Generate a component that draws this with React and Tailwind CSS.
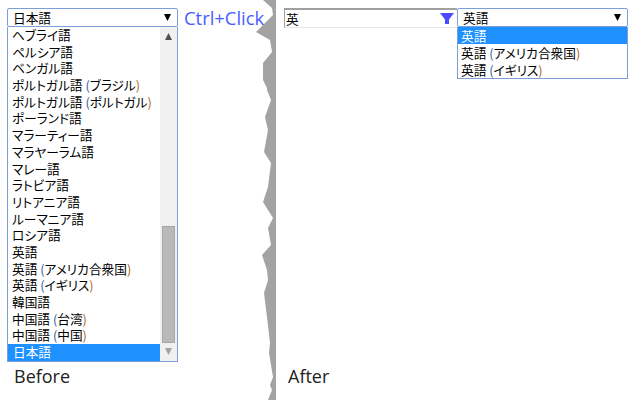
const JP = "font-['Noto_Sans_CJK_JP','Liberation_Sans',sans-serif] [font-feature-settings:'palt']"

const languages = [
  ['ヘブライ語'], ['ペルシア語'], ['ベンガル語'], ['ポルトガル語', 'ブラジル'], ['ポルトガル語', 'ポルトガル'],
  ['ポーランド語'], ['マラーティー語'], ['マラヤーラム語'], ['マレー語'], ['ラトビア語'], ['リトアニア語'],
  ['ルーマニア語'], ['ロシア語'], ['英語'], ['英語', 'アメリカ合衆国'], ['英語', 'イギリス'], ['韓国語'],
  ['中国語', '台湾'], ['中国語', '中国'], ['日本語'],
]

const filtered = [['英語'], ['英語', 'アメリカ合衆国'], ['英語', 'イギリス']]

function Label({ name, region }) {
  return (
    <>
      {name}
      {region && (
        <>
          {' '}
          <span className="text-[#2f5f9f]">(</span>
          {region}
          <span className="text-[#a8641e]">)</span>
        </>
      )}
    </>
  )
}

function Caret({ className }) {
  return (
    <svg width="7" height="7" viewBox="0 0 7 7" className={className}>
      <path d="M0 0h7L3.5 7z" fill="currentColor" />
    </svg>
  )
}

function SelectBox({ value }) {
  return (
    <div className="flex h-full items-center justify-between rounded-[2px] border border-[#7c9fd8] bg-white pl-[5px] pr-[6px]">
      <span>{value}</span>
      <Caret className="text-black" />
    </div>
  )
}

function Scrollbar() {
  return (
    <div className="flex w-[17px] flex-col items-center bg-[#f0f0f0]">
      <div className="flex h-[17px] shrink-0 items-center justify-center pt-[2px]">
        <Caret className="rotate-180 text-[#505050]" />
      </div>
      <div className="mt-[182px] h-[117px] w-[13px] border border-[#a6a6a6] bg-[#b9b9b9]" />
      <div className="flex h-[17px] shrink-0 items-center justify-center">
        <Caret className="text-[#a3a3a3]" />
      </div>
    </div>
  )
}

function TornEdge() {
  return (
    <svg width="24" height="400" viewBox="254 0 24 400" className="shrink-0">
      <path
        fill="#a3a3a3"
        d="M263 0L272 8L273 15L256 32L270 40L272 52L263 63L263 80L267 88L267 90L271 100L265 117L268 130L264 152L271 163L268 187L263 202L273 218L268 228L271 245L262 255L267 270L268 280L264 293L267 317L270 343L269 353L273 377L270 385L272 390L268 400L276 400L276 0Z"
      />
    </svg>
  )
}

export default function App() {
  return (
    <div className={`flex h-[400px] w-[640px] overflow-hidden bg-white text-[12.7px] leading-[17px] text-black ${JP}`}>
      <div className="flex w-[254px] shrink-0 flex-col pl-[7px] pt-[8px]">
        <div className="flex h-[19px] items-center">
          <div className="h-full w-[171px] shrink-0">
            <SelectBox value="日本語" />
          </div>
          <span className="relative z-10 ml-[6px] whitespace-nowrap font-['Open_Sans',sans-serif] text-[18.4px] text-[#4a5cff]">Ctrl+Click</span>
        </div>
        <div className="flex h-[335px] w-[171px] border border-t-0 border-[#7c9fd8]">
          <div className="min-w-0 flex-1">
            {languages.map(([name, region], i) => (
              <div
                key={i}
                className={`h-[16.7px] whitespace-nowrap pl-[4px] leading-[16.7px] ${name === '日本語' ? 'bg-[#1e90ff] pl-[5px] text-white' : ''}`}
              >
                <Label name={name} region={region} />
              </div>
            ))}
          </div>
          <Scrollbar />
        </div>
        <div className="ml-[7px] mt-[3px] font-['Open_Sans',sans-serif] text-[18px] leading-[22px] text-[#222]">Before</div>
      </div>

      <TornEdge />

      <div className="flex flex-1 flex-col pl-[6px] pt-[8px]">
        <div className="flex items-start">
          <div className="flex h-[20px] w-[173px] shrink-0 items-center justify-between border-b border-l border-t-2 border-b-[#e8e8e8] border-l-[#a0a0a0] border-t-[#a0a0a0] bg-white pl-[1px] pr-[3px]">
            <span>英</span>
            <svg width="14" height="11" viewBox="0 0 14 11">
              <path d="M0 0h14L9 6.5V11H5V6.5z" fill="#4a4aff" />
            </svg>
          </div>
          <div className="w-[171px] shrink-0">
            <div className="h-[19px]">
              <SelectBox value="英語" />
            </div>
            <div className="border border-t-0 border-[#7c9fd8] bg-white">
              {filtered.map(([name, region], i) => (
                <div key={i} className={`h-[17px] whitespace-nowrap pl-[3px] ${i === 0 ? 'bg-[#1e90ff] text-white' : ''}`}>
                  <Label name={name} region={region} />
                </div>
              ))}
            </div>
          </div>
        </div>
        <div className="ml-[4px] mt-[286px] font-['Open_Sans',sans-serif] text-[18px] leading-[22px] text-[#222]">After</div>
      </div>
    </div>
  )
}
